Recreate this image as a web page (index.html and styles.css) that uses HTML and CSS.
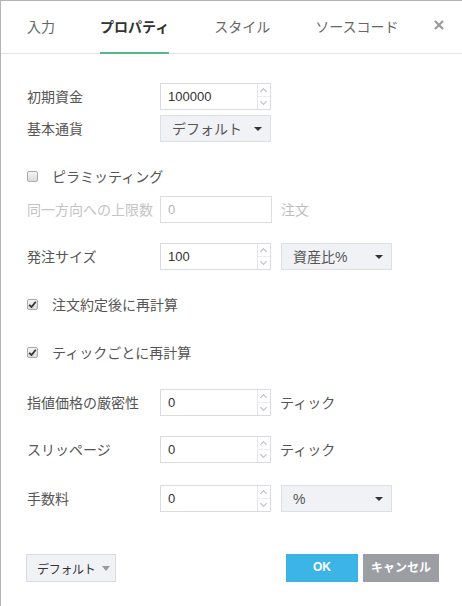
FILE: index.html
```html
<!DOCTYPE html>
<html lang="ja">
<head>
<meta charset="utf-8">
<link rel="stylesheet" href="styles.css">
</head>
<body>
<div class="dialog">
  <div class="tabs">
    <div class="tab">入力</div>
    <div class="tab active">プロパティ</div>
    <div class="tab">スタイル</div>
    <div class="tab">ソースコード</div>
    <div class="close">
      <svg width="10" height="10" viewBox="0 0 10 10"><path d="M1 1 L9 9 M9 1 L1 9" stroke="#9a9a9a" stroke-width="2.2" stroke-linecap="butt"/></svg>
    </div>
  </div>

  <div class="content">
    <div class="row r1">
      <div class="label">初期資金</div>
      <div class="num"><span class="val">100000</span><span class="spin"><i class="up"></i><i class="down"></i></span></div>
    </div>
    <div class="row r2">
      <div class="label">基本通貨</div>
      <div class="select"><span>デフォルト</span><i class="caret"></i></div>
    </div>
    <div class="row r3 check">
      <span class="cb"></span><span class="cblabel">ピラミッティング</span>
    </div>
    <div class="row r4 disabled">
      <div class="label">同一方向への上限数</div>
      <div class="num plain"><span class="val">0</span></div>
      <div class="unit">注文</div>
    </div>
    <div class="row r5">
      <div class="label">発注サイズ</div>
      <div class="num"><span class="val">100</span><span class="spin"><i class="up"></i><i class="down"></i></span></div>
      <div class="select wide"><span>資産比%</span><i class="caret"></i></div>
    </div>
    <div class="row r6 check">
      <span class="cb checked"><svg width="9" height="9" viewBox="0 0 9 9"><path d="M1.2 4.8 L3.5 7 L7.8 1.8" fill="none" stroke="#333" stroke-width="1.8"/></svg></span><span class="cblabel">注文約定後に再計算</span>
    </div>
    <div class="row r7 check">
      <span class="cb checked"><svg width="9" height="9" viewBox="0 0 9 9"><path d="M1.2 4.8 L3.5 7 L7.8 1.8" fill="none" stroke="#333" stroke-width="1.8"/></svg></span><span class="cblabel">ティックごとに再計算</span>
    </div>
    <div class="row r8">
      <div class="label">指値価格の厳密性</div>
      <div class="num"><span class="val">0</span><span class="spin"><i class="up"></i><i class="down"></i></span></div>
      <div class="unit">ティック</div>
    </div>
    <div class="row r9">
      <div class="label">スリッページ</div>
      <div class="num"><span class="val">0</span><span class="spin"><i class="up"></i><i class="down"></i></span></div>
      <div class="unit">ティック</div>
    </div>
    <div class="row r10">
      <div class="label">手数料</div>
      <div class="num"><span class="val">0</span><span class="spin"><i class="up"></i><i class="down"></i></span></div>
      <div class="select wide"><span>%</span><i class="caret"></i></div>
    </div>
  </div>

  <div class="footer">
    <div class="defbtn"><span>デフォルト</span><i class="caret gray"></i></div>
    <div class="spacer"></div>
    <div class="btn ok">OK</div>
    <div class="btn cancel">キャンセル</div>
  </div>
</div>
</body>
</html>
```

FILE: styles.css
```css
html, body {
  margin: 0;
  padding: 0;
  background: #fff;
}
body {
  font-family: "Liberation Sans", "Noto Sans CJK JP", sans-serif;
  font-size: 14px;
  color: #555;
}
.dialog {
  width: 461px;
  height: 605px;
  border-top: 1px solid #b4b4b4;
  border-left: 1px solid #b4b4b4;
  box-sizing: content-box;
  position: relative;
}
.tabs {
  display: flex;
  align-items: stretch;
  height: 52px;
  border-bottom: 1px solid #e0e3eb;
  padding-left: 26px;
}
.tab {
  font-size: 14px;
  line-height: 52px;
  color: #666;
  box-sizing: border-box;
  height: 53px;
  margin-bottom: -1px;
  margin-right: 45px;
  white-space: nowrap;
  flex: none;
}
.tab.active {
  color: #333;
  font-weight: bold;
  border-bottom: 2px solid #53b987;
}
.tab:nth-child(4) { margin-right: 0; }
.close {
  margin-left: auto;
  margin-right: 18px;
  display: flex;
  align-items: center;
  padding-bottom: 5px;
}
.close svg { display: block; }

.content {
  padding-left: 26px;
  padding-top: 29px;
  display: flex;
  flex-direction: column;
}
.row {
  display: flex;
  align-items: center;
  height: 27px;
}
.r2 { margin-top: 5px; }
.r3 { margin-top: 21px; }
.r4 { margin-top: 6px; }
.r5 { margin-top: 20px; }
.r6 { margin-top: 21px; }
.r7 { margin-top: 21px; }
.r8 { margin-top: 23px; }
.r9 { margin-top: 20px; }
.r10 { margin-top: 22px; }

.label {
  width: 133px;
  flex: none;
  line-height: 20px;
  white-space: nowrap;
}
.num {
  width: 111px;
  height: 27px;
  box-sizing: border-box;
  border: 1px solid #d9dbe0;
  display: flex;
  align-items: stretch;
  background: #fff;
  flex: none;
}
.num .val {
  flex: 1;
  font-family: "Liberation Sans", sans-serif;
  font-size: 13px;
  color: #333;
  line-height: 25px;
  padding-left: 7px;
}
.spin {
  width: 12px;
  border-left: 1px solid #e3e5ea;
  display: flex;
  flex-direction: column;
}
.spin i {
  flex: 1;
  position: relative;
}
.spin i.up { border-bottom: 1px solid #eceef2; }
.spin i::before {
  content: "";
  position: absolute;
  left: 3px;
  width: 4px;
  height: 4px;
  border-left: 1px solid #b9bcc4;
  border-top: 1px solid #b9bcc4;
}
.spin i.up::before { top: 5px; transform: rotate(45deg); }
.spin i.down::before { top: 2px; transform: rotate(-135deg); }

.select {
  width: 111px;
  height: 27px;
  box-sizing: border-box;
  border: 1px solid #dcdfe5;
  background: #f1f2f6;
  display: flex;
  align-items: center;
  padding: 0 8px 0 11px;
  color: #555;
  flex: none;
}
.select span { flex: 1; line-height: 20px; white-space: nowrap; }
.select.wide { margin-left: 10px; }
.caret {
  width: 0;
  height: 0;
  border-left: 4px solid transparent;
  border-right: 4px solid transparent;
  border-top: 4px solid #333;
  flex: none;
}
.caret.gray {
  border-left-width: 4px;
  border-right-width: 4px;
  border-top: 5px solid #9a9a9a;
  margin-left: 6px;
}

.check { height: 27px; }
.cb {
  width: 11px;
  height: 11px;
  box-sizing: border-box;
  border: 1px solid #a9abb0;
  border-radius: 2px;
  background: linear-gradient(#f4f4f4, #dcdcdc);
  flex: none;
  display: flex;
  align-items: center;
  justify-content: center;
}
.cb svg { display: block; }
.cblabel {
  margin-left: 14px;
  line-height: 20px;
  color: #555;
}

.disabled .label { color: #c4c4c4; }
.num.plain { border-color: #dcdcdc; width: 112px; }
.disabled .num .val { color: #b5b5b5; }
.disabled .unit { color: #bdbdbd; }
.unit {
  margin-left: 9px;
  line-height: 20px;
}

.footer {
  position: absolute;
  left: 25px;
  right: 23px;
  top: 553px;
  display: flex;
  align-items: center;
}
.spacer { flex: 1; }
.defbtn {
  width: 90px;
  height: 28px;
  box-sizing: border-box;
  border: 1px solid #d8dbe0;
  background: #f1f2f6;
  display: flex;
  align-items: center;
  padding: 0 8px 0 10px;
  color: #333;
  font-size: 12px;
  white-space: nowrap;
}
.defbtn span { flex: 1; letter-spacing: -0.3px; }
.btn {
  height: 28px;
  display: flex;
  align-items: center;
  justify-content: center;
  color: #fff;
  font-weight: bold;
  font-size: 12px;
  padding-bottom: 3px;
  box-sizing: border-box;
  white-space: nowrap;
}
.btn.ok { width: 72px; background: #3cb4e6; }
.btn.cancel { width: 76px; background: #9c9ea4; margin-left: 5px; }
```
